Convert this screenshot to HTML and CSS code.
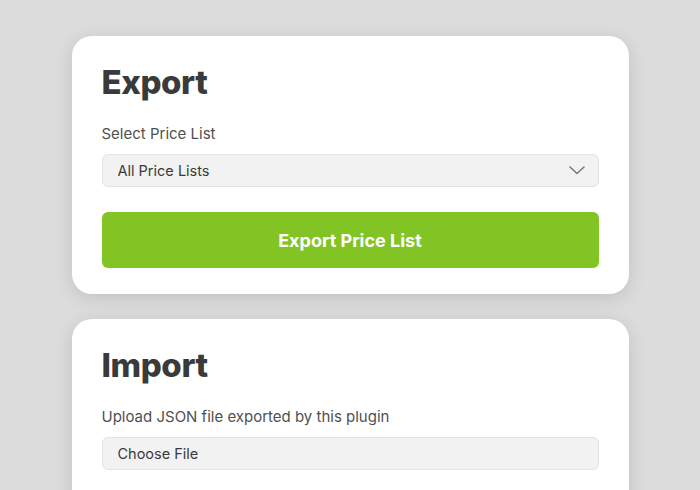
FILE: index.html
```html
<!DOCTYPE html>
<html lang="en">
<head>
    <meta charset="UTF-8">
    <meta name="viewport" content="width=device-width, initial-scale=1.0">
    <title>Price List Export / Import</title>
    <link rel="stylesheet" href="styles.css">
</head>
<body>
    <div class="container">
        <div class="card">
            <h1>Export</h1>
            <label class="field-label" for="priceList">Select Price List</label>
            <div class="select-wrapper">
                <select id="priceList" class="select">
                    <option>All Price Lists</option>
                </select>
                <svg class="chevron" width="16" height="9" viewBox="0 0 16 9">
                    <path d="M1 1l7 6.5L15 1" fill="none" stroke="#7a7a7a" stroke-width="1.6" stroke-linecap="round" stroke-linejoin="round"/>
                </svg>
            </div>
            <button class="btn-primary" type="button">Export Price List</button>
        </div>

        <div class="card">
            <h1>Import</h1>
            <label class="field-label" for="importFile">Upload JSON file exported by this plugin</label>
            <label class="file-input" for="importFile">
                <span>Choose File</span>
                <input type="file" id="importFile" accept=".json">
            </label>
        </div>
    </div>
</body>
</html>
```

FILE: styles.css
```css
* {
    box-sizing: border-box;
    margin: 0;
    padding: 0;
}

body {
    font-family: Inter, "Noto Sans", Arial, sans-serif;
    background-color: #dcdcdc;
    color: #3a3a3a;
    overflow: hidden;
}

.container {
    width: 557px;
    margin: 36px auto 0 auto;
    display: flex;
    flex-direction: column;
    gap: 25px;
}

.card {
    background-color: #ffffff;
    border-radius: 20px;
    padding: 26px 30px 26px 30px;
    display: flex;
    flex-direction: column;
    box-shadow: 0 4px 18px rgba(0, 0, 0, 0.12);
    min-height: 200px;
}

.card h1 {
    font-size: 33px;
    line-height: 40px;
    font-weight: 800;
    color: #3a3a3a;
    letter-spacing: -0.4px;
}

.field-label {
    font-size: 15px;
    line-height: 20px;
    color: #505050;
    margin-top: 22px;
}

.select-wrapper {
    position: relative;
    margin-top: 10px;
}

.select {
    appearance: none;
    -webkit-appearance: none;
    width: 100%;
    height: 33px;
    padding: 0 40px 0 15px;
    font-family: inherit;
    font-size: 14.5px;
    color: #3a3a3a;
    background-color: #f2f2f2;
    border: 1px solid #e4e4e4;
    border-radius: 6px;
    outline: none;
}

.chevron {
    position: absolute;
    right: 14px;
    top: 12px;
    pointer-events: none;
}

.btn-primary {
    margin-top: 25px;
    height: 56px;
    width: 100%;
    border: none;
    border-radius: 6px;
    background-color: #83c425;
    color: #ffffff;
    font-family: inherit;
    font-size: 18px;
    font-weight: 700;
    cursor: pointer;
}

.btn-primary:hover {
    background-color: #78b51f;
}

.file-input {
    margin-top: 10px;
    height: 33px;
    display: flex;
    align-items: center;
    padding: 0 15px;
    font-size: 14.5px;
    color: #3a3a3a;
    background-color: #f2f2f2;
    border: 1px solid #e4e4e4;
    border-radius: 6px;
    cursor: pointer;
}

.file-input input {
    display: none;
}
```
